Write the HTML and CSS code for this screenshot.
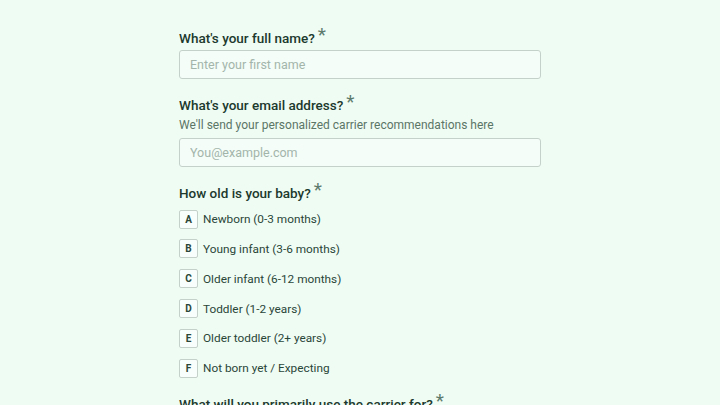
FILE: index.html
```html
<!DOCTYPE html>
<html lang="en">
<head>
  <meta charset="UTF-8" />
  <meta name="viewport" content="width=device-width, initial-scale=1.0"/>
  <title>Carrier Finder</title>
  <link rel="stylesheet" href="styles.css">
</head>
<body>
  <main class="form">

    <!-- Name -->
    <div class="field">
      <label class="question">What's your full name?<span class="req">*</span></label>
      <input class="text-input" type="text" placeholder="Enter your first name">
    </div>

    <!-- Email -->
    <div class="field">
      <label class="question">What's your email address?<span class="req">*</span></label>
      <p class="hint">We'll send your personalized carrier recommendations here</p>
      <input class="text-input" type="email" placeholder="You@example.com">
    </div>

    <!-- Baby age -->
    <div class="field">
      <label class="question">How old is your baby?<span class="req">*</span></label>
      <ul class="choices">
        <li class="choice"><span class="key">A</span>Newborn (0-3 months)</li>
        <li class="choice"><span class="key">B</span>Young infant (3-6 months)</li>
        <li class="choice"><span class="key">C</span>Older infant (6-12 months)</li>
        <li class="choice"><span class="key">D</span>Toddler (1-2 years)</li>
        <li class="choice"><span class="key">E</span>Older toddler (2+ years)</li>
        <li class="choice"><span class="key">F</span>Not born yet / Expecting</li>
      </ul>
    </div>

    <!-- Usage -->
    <div class="field">
      <label class="question">What will you primarily use the carrier for?<span class="req">*</span></label>
    </div>

  </main>
</body>
</html>
```

FILE: styles.css
```css
/* Page basics */
body {
  margin: 0;
  background-color: #effcf4;
  color: #1f3b2d;
  font-family: Roboto, "Open Sans", Arial, sans-serif;
}

/* Centered form column */
.form {
  width: 362px;
  margin: 0 auto;
  padding-top: 26px;
}

.field {
  margin-bottom: 14px;
}

/* Question labels */
.question {
  display: block;
  font-size: 13.5px;
  font-weight: 500;
  line-height: 22px;
  color: #20392d;
  margin-bottom: 1px;
}

.req {
  font-size: 19px;
  font-weight: 400;
  color: #5d7b6c;
  margin-left: 3px;
  position: relative;
  top: -2px;
}

.hint {
  margin: -1px 0 4px;
  font-size: 12px;
  line-height: 18px;
  color: #5b7566;
}

/* Text inputs */
.text-input {
  display: block;
  box-sizing: border-box;
  width: 100%;
  height: 29px;
  padding: 0 10px;
  border: 1px solid #c4d1ca;
  border-radius: 3px;
  background-color: #f4fdf8;
  font-family: Roboto, "Open Sans", Arial, sans-serif;
  font-size: 12.5px;
  color: #1f3b2d;
}

.text-input::placeholder {
  color: #a3b5ab;
}

/* Lettered choices */
.choices {
  list-style: none;
  margin: 5px 0 0;
  padding: 0;
}

.choice {
  display: flex;
  align-items: center;
  height: 20px;
  margin-bottom: 9.85px;
  font-size: 11.8px;
  color: #2a4638;
}

.choice:last-child {
  margin-bottom: 8px;
}

.key {
  display: flex;
  align-items: center;
  justify-content: center;
  box-sizing: border-box;
  width: 19px;
  height: 19px;
  margin-right: 5px;
  border: 1px solid #c4d1ca;
  border-radius: 2px;
  background-color: #f8fefb;
  font-size: 10px;
  font-weight: 700;
  color: #2a4638;
}
```
